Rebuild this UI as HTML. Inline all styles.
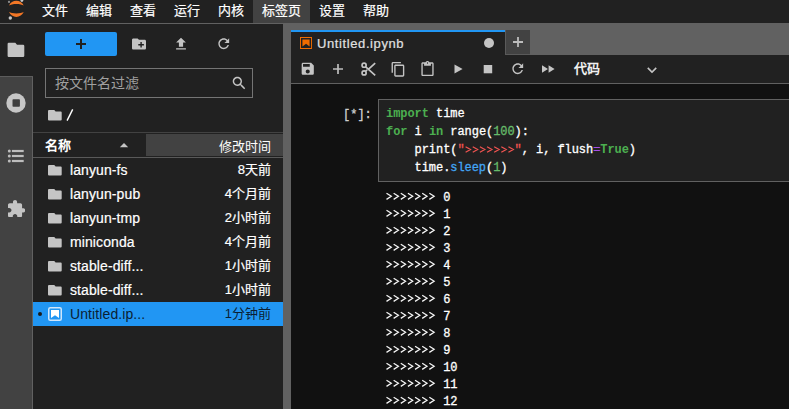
<!DOCTYPE html>
<html lang="zh-CN">
<head>
<meta charset="utf-8">
<style>
*{margin:0;padding:0;box-sizing:border-box}
html,body{width:789px;height:409px;overflow:hidden;background:#212121}
body{position:relative;font-family:"Liberation Sans",sans-serif;font-size:13px;color:rgba(255,255,255,0.87);-webkit-text-stroke:0.2px currentColor}
.a{position:absolute}
svg{position:absolute;display:block}
#menubar{left:0;top:0;width:789px;height:23px;background:#212121}
#menuline{left:0;top:23px;width:789px;height:1px;background:#616161}
.mi{position:absolute;top:0;height:23px;line-height:21px;padding:0 9px;color:#fff;font-size:13px;white-space:nowrap}
.mi.on{background:#424242}
#side{left:0;top:24px;width:32px;height:385px;background:#424242}
#sideb{left:32px;top:24px;width:1px;height:385px;background:#616161}
#sidesel{left:0;top:24px;width:33px;height:52px;background:#212121}
#gap{left:283px;top:24px;width:8px;height:385px;background:#616161}
#tabbar{left:291px;top:24px;width:498px;height:31px;background:#616161}
#tab{left:291px;top:30px;width:214px;height:25px;background:#212121;border-top:2px solid #2196f3}
#addtab{left:505px;top:30px;width:25px;height:25px;background:#424242;border-left:1px solid #5a5a5a;border-bottom:1px solid #5a5a5a}
#toolbar{left:291px;top:55px;width:498px;height:28px;background:#212121}
#tbline{left:291px;top:83px;width:498px;height:1px;background:#616161}
#nb{left:291px;top:84px;width:498px;height:325px;background:#111111}
.ic{fill:#c4c4c4}
#newbtn{left:45px;top:32px;width:72px;height:24px;background:#2196f3;border-radius:2px}
#filter{left:45px;top:68px;width:208px;height:30px;border:1px solid #757575;background:#212121}
#ph{left:55px;top:72px;font-size:14px;color:#a0a0a0;white-space:nowrap;-webkit-text-stroke:0}
#hdrline1{left:33px;top:132px;width:250px;height:1px;background:#424242}
#hdrline2{left:33px;top:157px;width:250px;height:1px;background:#595959}
#modcell{left:146px;top:134px;width:137px;height:22px;background:#424242}
.hdr{top:134px;height:24px;line-height:24px;font-weight:bold;color:#fff;white-space:nowrap;-webkit-text-stroke:0}
.row{position:absolute;left:33px;width:250px;height:24px}
.row.sel{background:#2196f3}
.fname{position:absolute;left:37px;top:0;line-height:24px;color:#fff;white-space:nowrap;font-size:14px;letter-spacing:0.1px}
.fdate{position:absolute;right:12px;top:0;line-height:24px;color:#fff;white-space:nowrap}
.row.sel .fname,.row.sel .fdate{color:#0b1f33;-webkit-text-stroke:0}
.mono{font-family:"Liberation Mono",monospace;-webkit-text-stroke:0.3px currentColor}
#prompt{left:343px;top:106px;font-size:12px;line-height:18px;color:#d0d0d0;white-space:pre}
#cell{left:378px;top:99px;width:420px;height:83px;border:1px solid #616161;background:#212121}
#code{left:386px;top:105px;font-size:12px;line-height:18.15px;color:#fff;white-space:pre;letter-spacing:-0.06px}
.k{color:#4caf50;font-weight:bold;-webkit-text-stroke:0}
.n{color:#66bb6a}
.s{color:#ef5350}
.o{color:#a64de6}
.p{color:#42a5f5}
#out{left:386px;top:190px;font-size:12px;line-height:17px;color:#fff;white-space:pre;letter-spacing:-0.06px}
</style>
</head>
<body>
<div id="menubar" class="a"></div>
<div id="menuline" class="a"></div>
<!-- logo -->
<svg style="left:0;top:0" width="32" height="23" viewBox="0 0 32 23">
  <path d="M9 5.6C11.5 -0.8 21.2 -0.8 23.7 5.6C21.2 3.5 11.5 3.5 9 5.6Z" fill="#f37726"/>
  <path d="M9 12.1C11.5 18.5 21.2 18.5 23.7 12.1C21.2 13.9 11.5 13.9 9 12.1Z" fill="#f37726"/>
  <circle cx="9" cy="1.9" r="1.1" fill="#8f8f8f"/>
  <circle cx="21.9" cy="0.5" r="1.4" fill="#c8c8c8"/>
  <circle cx="10.3" cy="18" r="1.7" fill="#c8c8c8"/>
</svg>
<div class="mi" style="left:33px">文件</div>
<div class="mi" style="left:77px">编辑</div>
<div class="mi" style="left:121px">查看</div>
<div class="mi" style="left:165px">运行</div>
<div class="mi" style="left:209px">内核</div>
<div class="mi on" style="left:253px">标签页</div>
<div class="mi" style="left:310px">设置</div>
<div class="mi" style="left:354px">帮助</div>

<!-- left sidebar -->
<div id="side" class="a"></div>
<div id="sideb" class="a"></div>
<div id="sidesel" class="a"></div>
<div class="a" style="left:0;top:76px;width:33px;height:1px;background:#5c5c5c"></div>
<svg style="left:7px;top:42px" width="18" height="16" viewBox="0 0 18 16"><path class="ic" d="M1.8 0.7H8.3L10 2.7H16.1Q17.3 2.7 17.3 3.9V13.7Q17.3 14.9 16.1 14.9H1.8Q0.6 14.9 0.6 13.7V1.9Q0.6 0.7 1.8 0.7Z"/></svg>
<svg style="left:6px;top:93px" width="20" height="20" viewBox="0 0 20 20"><circle cx="10" cy="10" r="9.7" fill="#c6c6c6"/><rect x="6.5" y="6.2" width="7.4" height="7.6" rx="0.8" fill="#3e3e3e"/></svg>
<svg style="left:4px;top:144px" width="24" height="24" viewBox="0 0 24 24"><g fill="#bdbdbd"><circle cx="5.3" cy="7" r="1.5"/><circle cx="5.3" cy="12" r="1.5"/><circle cx="5.3" cy="17" r="1.5"/><rect x="7.9" y="5.9" width="11.8" height="2.2"/><rect x="7.9" y="10.9" width="11.8" height="2.2"/><rect x="7.9" y="15.9" width="11.8" height="2.2"/></g></svg>
<svg style="left:7.6px;top:199.6px" width="17.4" height="17.4" viewBox="2 1 21 21"><path class="ic" d="M20.5 11H19V7c0-1.1-.9-2-2-2h-4V3.5C13 2.12 11.88 1 10.5 1S8 2.12 8 3.5V5H4c-1.1 0-1.99.9-1.99 2v3.8H3.5c1.49 0 2.7 1.21 2.7 2.7s-1.21 2.7-2.7 2.7H2V20c0 1.1.9 2 2 2h3.8v-1.5c0-1.49 1.21-2.7 2.7-2.7 1.49 0 2.7 1.21 2.7 2.7V22H17c1.1 0 2-.9 2-2v-4h1.5c1.38 0 2.5-1.12 2.5-2.5S21.88 11 20.5 11z"/></svg>

<!-- file browser -->
<div id="newbtn" class="a"></div>
<svg style="left:76px;top:39px" width="10" height="10" viewBox="0 0 10 10"><path d="M4 0h2v4h4v2H6v4H4V6H0V4h4z" fill="#212121"/></svg>
<svg style="left:132px;top:36.5px" width="14" height="14" viewBox="2 2 20 20"><path class="ic" d="M20 6h-8l-2-2H4c-1.11 0-1.99.89-1.99 2L2 18c0 1.11.89 2 2 2h16c1.11 0 2-.89 2-2V8c0-1.11-.89-2-2-2zm-1 8h-3v3h-2v-3h-3v-2h3V9h2v3h3v2z"/></svg>
<svg style="left:174px;top:37.2px" width="14" height="14" viewBox="2 2 20 20"><path class="ic" d="M9 16h6v-6h4l-7-7-7 7h4zm-4 2h14v2H5z"/></svg>
<svg style="left:216.5px;top:37px" width="13.5" height="13.5" viewBox="2 2 20 20"><path class="ic" d="M17.65 6.35C16.2 4.9 14.21 4 12 4c-4.42 0-7.99 3.58-7.99 8s3.57 8 7.99 8c3.73 0 6.84-2.55 7.73-6h-2.08c-.82 2.33-3.04 4-5.65 4-3.31 0-6-2.69-6-6s2.69-6 6-6c1.66 0 3.14.69 4.22 1.78L13 11h7V4l-2.35 2.35z"/></svg>
<div id="filter" class="a"></div>
<div id="ph" class="a">按文件名过滤</div>
<svg style="left:231.8px;top:75.9px" width="14.3" height="14.3" viewBox="2 2 20 20"><path class="ic" d="M15.5 14h-.79l-.28-.27C15.41 12.59 16 11.11 16 9.5 16 5.91 13.09 3 9.5 3S3 5.91 3 9.5 5.91 16 9.5 16c1.61 0 3.09-.59 4.23-1.57l.27.28v.79l5 4.99L20.49 19l-4.99-5zm-6 0C7.01 14 5 11.99 5 9.5S7.01 5 9.5 5 14 7.01 14 9.5 11.99 14 9.5 14z"/></svg>
<svg style="left:48.2px;top:109.6px" width="14" height="11" viewBox="0 0 14 11"><path class="ic" d="M1 0H6.3L7.6 1.5H12.7Q13.7 1.5 13.7 2.5V9.5Q13.7 10.5 12.7 10.5H1Q0 10.5 0 9.5V1Q0 0 1 0Z"/></svg>
<svg style="left:64px;top:106px" width="12" height="18" viewBox="0 0 12 18"><path d="M3.1 14.6L8.7 3.4" stroke="#ffffff" stroke-width="1.4"/></svg>
<div id="hdrline1" class="a"></div>
<div id="modcell" class="a"></div>
<div id="hdrline2" class="a"></div>
<div class="a hdr" style="left:45px">名称</div>
<svg style="left:119px;top:142px" width="10" height="6" viewBox="0 0 10 6"><path d="M0.8 5.3L5 0.9L9.2 5.3Z" fill="#c4c4c4"/></svg>
<div class="a hdr" style="left:219px;top:135px;font-weight:normal">修改时间</div>

<div class="row" style="top:158px"><svg style="left:15.15px;top:6.6px" width="14" height="11" viewBox="0 0 14 11"><path class="ic" d="M1 0H6.3L7.6 1.5H12.7Q13.7 1.5 13.7 2.5V9.5Q13.7 10.5 12.7 10.5H1Q0 10.5 0 9.5V1Q0 0 1 0Z"/></svg><div class="fname">lanyun-fs</div><div class="fdate">8天前</div></div>
<div class="row" style="top:182px"><svg style="left:15.15px;top:6.6px" width="14" height="11" viewBox="0 0 14 11"><path class="ic" d="M1 0H6.3L7.6 1.5H12.7Q13.7 1.5 13.7 2.5V9.5Q13.7 10.5 12.7 10.5H1Q0 10.5 0 9.5V1Q0 0 1 0Z"/></svg><div class="fname">lanyun-pub</div><div class="fdate">4个月前</div></div>
<div class="row" style="top:206px"><svg style="left:15.15px;top:6.6px" width="14" height="11" viewBox="0 0 14 11"><path class="ic" d="M1 0H6.3L7.6 1.5H12.7Q13.7 1.5 13.7 2.5V9.5Q13.7 10.5 12.7 10.5H1Q0 10.5 0 9.5V1Q0 0 1 0Z"/></svg><div class="fname">lanyun-tmp</div><div class="fdate">2小时前</div></div>
<div class="row" style="top:230px"><svg style="left:15.15px;top:6.6px" width="14" height="11" viewBox="0 0 14 11"><path class="ic" d="M1 0H6.3L7.6 1.5H12.7Q13.7 1.5 13.7 2.5V9.5Q13.7 10.5 12.7 10.5H1Q0 10.5 0 9.5V1Q0 0 1 0Z"/></svg><div class="fname">miniconda</div><div class="fdate">4个月前</div></div>
<div class="row" style="top:254px"><svg style="left:15.15px;top:6.6px" width="14" height="11" viewBox="0 0 14 11"><path class="ic" d="M1 0H6.3L7.6 1.5H12.7Q13.7 1.5 13.7 2.5V9.5Q13.7 10.5 12.7 10.5H1Q0 10.5 0 9.5V1Q0 0 1 0Z"/></svg><div class="fname">stable-diff...</div><div class="fdate">1小时前</div></div>
<div class="row" style="top:278px"><svg style="left:15.15px;top:6.6px" width="14" height="11" viewBox="0 0 14 11"><path class="ic" d="M1 0H6.3L7.6 1.5H12.7Q13.7 1.5 13.7 2.5V9.5Q13.7 10.5 12.7 10.5H1Q0 10.5 0 9.5V1Q0 0 1 0Z"/></svg><div class="fname">stable-diff...</div><div class="fdate">1小时前</div></div>
<div class="row sel" style="top:302px"><svg style="left:5px;top:10px" width="4" height="4" viewBox="0 0 4 4"><circle cx="2" cy="2" r="2" fill="#1a1a1a"/></svg><svg style="left:15px;top:5px" width="14" height="14" viewBox="0 0 14 14"><rect x="0.75" y="0.75" width="12.5" height="12.5" rx="1.5" fill="none" stroke="#cfe6fb" stroke-width="1.5"/><path d="M3 3h8v8L7 8.3 3 11z" fill="#fff"/></svg><div class="fname">Untitled.ip...</div><div class="fdate">1分钟前</div></div>

<!-- main area -->
<div id="gap" class="a"></div>
<div id="tabbar" class="a"></div>
<div id="tab" class="a"></div>
<svg style="left:300px;top:37px" width="12" height="12" viewBox="1.8 1.8 18.4 18.4"><path fill="#ef6c00" d="M18.7 3.3v15.4H3.3V3.3h15.4m1.5-1.5H1.8v18.3h18.3l.1-18.3z"/><path fill="#ef6c00" d="M16.5 16.5l-5.4-4.3-5.6 4.3v-11h11z"/></svg>
<div class="a" style="left:317px;top:33px;line-height:22px;font-size:13px;letter-spacing:0.6px;color:#e0e0e0;white-space:nowrap">Untitled.ipynb</div>
<svg style="left:484px;top:38px" width="10" height="10" viewBox="0 0 10 10"><circle cx="5" cy="5" r="5" fill="#c4c4c4"/></svg>
<div id="addtab" class="a"></div>
<svg style="left:513px;top:37px" width="10" height="10" viewBox="0 0 10 10"><path fill="#bdbdbd" d="M4.1 0h1.8v4.1H10v1.8H5.9V10H4.1V5.9H0V4.1h4.1z"/></svg>
<div id="toolbar" class="a"></div>
<div id="tbline" class="a"></div>
<!-- toolbar icons -->
<svg style="left:301.3px;top:62.1px" width="13.5" height="13.5" viewBox="2 2 20 20"><path class="ic" d="M17 3H5c-1.11 0-2 .9-2 2v14c0 1.1.89 2 2 2h14c1.1 0 2-.9 2-2V7l-4-4zm-5 16c-1.66 0-3-1.34-3-3s1.34-3 3-3 3 1.34 3 3-1.34 3-3 3zm3-10H5V5h10v4z"/></svg>
<svg style="left:333px;top:64px" width="10" height="10" viewBox="0 0 10 10"><path fill="#bdbdbd" d="M4.15 0h1.7v4.15H10v1.7H5.85V10H4.15V5.85H0V4.15h4.15z"/></svg>
<svg style="left:357px;top:59px" width="22" height="20" viewBox="0 0 22 20"><g fill="none" stroke="#c4c4c4" stroke-width="1.7"><circle cx="7.1" cy="6.2" r="2.05"/><circle cx="7.1" cy="13.9" r="2.05"/><path d="M8.7 7.9L18.2 16.3M11.6 10.2L18.2 4.1M8.7 12.2L10.2 10.9"/></g></svg>
<svg style="left:389.8px;top:60.6px" width="16.5" height="16.5" viewBox="0 0 18 18"><path class="ic" d="M11.9,1H3.2C2.4,1,1.7,1.7,1.7,2.5v10.2h1.5V2.5h8.7V1z M14.1,3.9h-8c-0.8,0-1.5,0.7-1.5,1.5v10.2c0,0.8,0.7,1.5,1.5,1.5h8 c0.8,0,1.5-0.7,1.5-1.5V5.4C15.5,4.6,14.9,3.9,14.1,3.9z M14.1,15.5h-8V5.4h8V15.5z"/></svg>
<svg style="left:419px;top:61px" width="17" height="15" viewBox="2 0 20 22"><path class="ic" d="M19 2h-4.18C14.4.84 13.3 0 12 0c-1.3 0-2.4.84-2.82 2H5c-1.1 0-2 .9-2 2v16c0 1.1.9 2 2 2h14c1.1 0 2-.9 2-2V4c0-1.1-.9-2-2-2zm-7 0c.55 0 1 .45 1 1s-.45 1-1 1-1-.45-1-1 .45-1 1-1zm7 18H5V4h2v3h10V4h2v16z"/></svg>
<svg style="left:454px;top:64px" width="10" height="10" viewBox="0 0 10 10"><path class="ic" d="M0.5 0.4L8.6 5L0.5 9.6Z"/></svg>
<svg style="left:483px;top:64px" width="10" height="10" viewBox="0 0 10 10"><path class="ic" d="M0.7 1h8.5v8.3H0.7z"/></svg>
<svg style="left:511.45px;top:62.05px" width="13.5" height="13.5" viewBox="2 2 20 20"><path class="ic" d="M17.65 6.35C16.2 4.9 14.21 4 12 4c-4.42 0-7.99 3.58-7.99 8s3.57 8 7.99 8c3.73 0 6.84-2.55 7.73-6h-2.08c-.82 2.33-3.04 4-5.65 4-3.31 0-6-2.69-6-6s2.69-6 6-6c1.66 0 3.14.69 4.22 1.78L13 11h7V4l-2.35 2.35z"/></svg>
<svg style="left:541.8px;top:65.2px" width="13" height="8" viewBox="0 0 13 8"><path class="ic" d="M0 0.2L6 4 0 7.8ZM6.6 0.2L12.6 4 6.6 7.8Z"/></svg>
<div class="a" style="left:574px;top:57px;line-height:24px;font-weight:bold;color:#f0f0f0;white-space:nowrap;-webkit-text-stroke:0">代码</div>
<svg style="left:644px;top:62px" width="16" height="16" viewBox="2 2 20 20"><path class="ic" d="M7.41 8.59L12 13.17l4.59-4.58L18 10l-6 6-6-6 1.41-1.41z"/></svg>

<div id="nb" class="a"></div>
<div id="prompt" class="a mono">[*]:</div>
<div id="cell" class="a"></div>
<div id="code" class="a mono"><span class="k">import</span> time
<span class="k">for</span> i <span class="k">in</span> range(<span class="n">100</span>):
    print(<span class="s">"       "</span>, i, flush<span class="o">=</span><span class="k">True</span>)
    time.<span class="p">sleep</span>(<span class="n">1</span>)</div>
<div id="out" class="a mono">        0
        1
        2
        3
        4
        5
        6
        7
        8
        9
        10
        11
        12</div>
<svg style="left:384px;top:188px" width="60" height="221" viewBox="0 0 60 221"><path d="M2.50 5.20L7.30 8.30L2.50 11.40M9.64 5.20L14.44 8.30L9.64 11.40M16.78 5.20L21.58 8.30L16.78 11.40M23.92 5.20L28.72 8.30L23.92 11.40M31.06 5.20L35.86 8.30L31.06 11.40M38.20 5.20L43.00 8.30L38.20 11.40M45.34 5.20L50.14 8.30L45.34 11.40M2.50 22.20L7.30 25.30L2.50 28.40M9.64 22.20L14.44 25.30L9.64 28.40M16.78 22.20L21.58 25.30L16.78 28.40M23.92 22.20L28.72 25.30L23.92 28.40M31.06 22.20L35.86 25.30L31.06 28.40M38.20 22.20L43.00 25.30L38.20 28.40M45.34 22.20L50.14 25.30L45.34 28.40M2.50 39.20L7.30 42.30L2.50 45.40M9.64 39.20L14.44 42.30L9.64 45.40M16.78 39.20L21.58 42.30L16.78 45.40M23.92 39.20L28.72 42.30L23.92 45.40M31.06 39.20L35.86 42.30L31.06 45.40M38.20 39.20L43.00 42.30L38.20 45.40M45.34 39.20L50.14 42.30L45.34 45.40M2.50 56.20L7.30 59.30L2.50 62.40M9.64 56.20L14.44 59.30L9.64 62.40M16.78 56.20L21.58 59.30L16.78 62.40M23.92 56.20L28.72 59.30L23.92 62.40M31.06 56.20L35.86 59.30L31.06 62.40M38.20 56.20L43.00 59.30L38.20 62.40M45.34 56.20L50.14 59.30L45.34 62.40M2.50 73.20L7.30 76.30L2.50 79.40M9.64 73.20L14.44 76.30L9.64 79.40M16.78 73.20L21.58 76.30L16.78 79.40M23.92 73.20L28.72 76.30L23.92 79.40M31.06 73.20L35.86 76.30L31.06 79.40M38.20 73.20L43.00 76.30L38.20 79.40M45.34 73.20L50.14 76.30L45.34 79.40M2.50 90.20L7.30 93.30L2.50 96.40M9.64 90.20L14.44 93.30L9.64 96.40M16.78 90.20L21.58 93.30L16.78 96.40M23.92 90.20L28.72 93.30L23.92 96.40M31.06 90.20L35.86 93.30L31.06 96.40M38.20 90.20L43.00 93.30L38.20 96.40M45.34 90.20L50.14 93.30L45.34 96.40M2.50 107.20L7.30 110.30L2.50 113.40M9.64 107.20L14.44 110.30L9.64 113.40M16.78 107.20L21.58 110.30L16.78 113.40M23.92 107.20L28.72 110.30L23.92 113.40M31.06 107.20L35.86 110.30L31.06 113.40M38.20 107.20L43.00 110.30L38.20 113.40M45.34 107.20L50.14 110.30L45.34 113.40M2.50 124.20L7.30 127.30L2.50 130.40M9.64 124.20L14.44 127.30L9.64 130.40M16.78 124.20L21.58 127.30L16.78 130.40M23.92 124.20L28.72 127.30L23.92 130.40M31.06 124.20L35.86 127.30L31.06 130.40M38.20 124.20L43.00 127.30L38.20 130.40M45.34 124.20L50.14 127.30L45.34 130.40M2.50 141.20L7.30 144.30L2.50 147.40M9.64 141.20L14.44 144.30L9.64 147.40M16.78 141.20L21.58 144.30L16.78 147.40M23.92 141.20L28.72 144.30L23.92 147.40M31.06 141.20L35.86 144.30L31.06 147.40M38.20 141.20L43.00 144.30L38.20 147.40M45.34 141.20L50.14 144.30L45.34 147.40M2.50 158.20L7.30 161.30L2.50 164.40M9.64 158.20L14.44 161.30L9.64 164.40M16.78 158.20L21.58 161.30L16.78 164.40M23.92 158.20L28.72 161.30L23.92 164.40M31.06 158.20L35.86 161.30L31.06 164.40M38.20 158.20L43.00 161.30L38.20 164.40M45.34 158.20L50.14 161.30L45.34 164.40M2.50 175.20L7.30 178.30L2.50 181.40M9.64 175.20L14.44 178.30L9.64 181.40M16.78 175.20L21.58 178.30L16.78 181.40M23.92 175.20L28.72 178.30L23.92 181.40M31.06 175.20L35.86 178.30L31.06 181.40M38.20 175.20L43.00 178.30L38.20 181.40M45.34 175.20L50.14 178.30L45.34 181.40M2.50 192.20L7.30 195.30L2.50 198.40M9.64 192.20L14.44 195.30L9.64 198.40M16.78 192.20L21.58 195.30L16.78 198.40M23.92 192.20L28.72 195.30L23.92 198.40M31.06 192.20L35.86 195.30L31.06 198.40M38.20 192.20L43.00 195.30L38.20 198.40M45.34 192.20L50.14 195.30L45.34 198.40M2.50 209.20L7.30 212.30L2.50 215.40M9.64 209.20L14.44 212.30L9.64 215.40M16.78 209.20L21.58 212.30L16.78 215.40M23.92 209.20L28.72 212.30L23.92 215.40M31.06 209.20L35.86 212.30L31.06 215.40M38.20 209.20L43.00 212.30L38.20 215.40M45.34 209.20L50.14 212.30L45.34 215.40" fill="none" stroke="#f6f6f6" stroke-width="1.25"/></svg>
<svg style="left:460px;top:140px" width="56" height="16" viewBox="0 0 56 16"><path d="M5.60 6.70L10.50 9.50L5.60 12.30M12.74 6.70L17.64 9.50L12.74 12.30M19.88 6.70L24.78 9.50L19.88 12.30M27.02 6.70L31.92 9.50L27.02 12.30M34.16 6.70L39.06 9.50L34.16 12.30M41.30 6.70L46.20 9.50L41.30 12.30M48.44 6.70L53.34 9.50L48.44 12.30" fill="none" stroke="#ef5350" stroke-width="1.25"/></svg>
</body>
</html>
